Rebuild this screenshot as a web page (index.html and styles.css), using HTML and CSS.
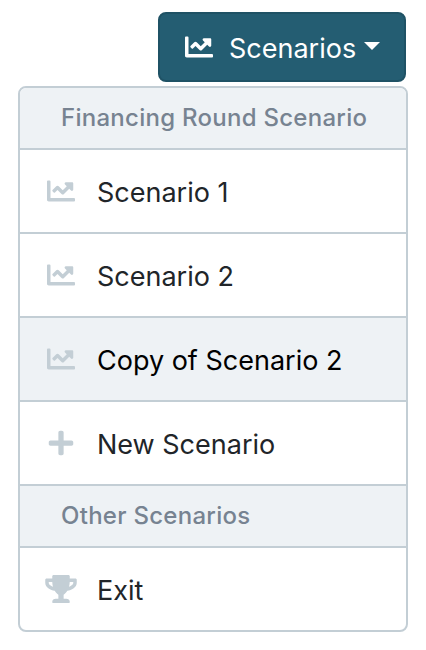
FILE: index.html
```html
<!DOCTYPE html>
<html lang="en">
<head>
<meta charset="utf-8">
<title>Scenarios</title>
<link rel="stylesheet" href="styles.css">
</head>
<body>
<svg class="defs" aria-hidden="true">
  <symbol id="chart" viewBox="0 0 512 512"><path d="M496 384H64V80c0-8.84-7.16-16-16-16H16C7.16 64 0 71.16 0 80v336c0 17.67 14.33 32 32 32h464c8.84 0 16-7.16 16-16v-32c0-8.84-7.16-16-16-16zM464 96H345.94c-21.38 0-32.09 25.85-16.97 40.97l32.4 32.4L288 242.75l-73.37-73.37c-12.5-12.5-32.76-12.5-45.25 0l-68.69 68.69c-6.25 6.25-6.25 16.38 0 22.63l22.62 22.62c6.25 6.25 16.38 6.25 22.63 0L192 237.25l73.37 73.37c12.5 12.5 32.76 12.5 45.25 0l96-96 32.4 32.4c15.12 15.12 40.97 4.41 40.97-16.97V112c.01-8.84-7.15-16-15.99-16z"/></symbol>
  <symbol id="plus" viewBox="0 0 448 512"><path d="M416 208H272V64c0-17.67-14.33-32-32-32h-32c-17.67 0-32 14.33-32 32v144H32c-17.67 0-32 14.33-32 32v32c0 17.67 14.33 32 32 32h144v144c0 17.67 14.33 32 32 32h32c17.67 0 32-14.33 32-32V304h144c17.67 0 32-14.33 32-32v-32c0-17.67-14.33-32-32-32z"/></symbol>
  <symbol id="trophy" viewBox="0 0 576 512"><path d="M552 64H448V24c0-13.3-10.7-24-24-24H152c-13.3 0-24 10.7-24 24v40H24C10.7 64 0 74.7 0 88v56c0 35.7 22.5 72.4 61.9 100.7 31.5 22.7 69.8 37.1 110 41.7C203.3 338.5 240 360 240 360v72h-48c-35.3 0-64 20.7-64 56v12c0 6.6 5.4 12 12 12h296c6.6 0 12-5.4 12-12v-12c0-35.3-28.7-56-64-56h-48v-72s36.7-21.5 68.1-73.6c40.3-4.6 78.6-19 110-41.7 39.3-28.3 61.9-65 61.9-100.7V88c0-13.3-10.7-24-24-24zM99.3 192.8C74.9 175.2 64 155.6 64 144v-16h64.2c1 32.6 5.8 61.2 12.8 86.2-15.1-5.2-29.2-12.4-41.7-21.4zM512 144c0 16.1-17.7 36.1-35.3 48.8-12.5 9-26.7 16.2-41.8 21.4 7-25 11.8-53.6 12.8-86.2H512v16z"/></symbol>
</svg>
<div class="dropdown">
  <button class="toggle" type="button">
    <svg class="icon"><use href="#chart"/></svg>
    <span class="toggle-label">Scenarios</span>
    <span class="caret"></span>
  </button>
  <div class="menu">
    <div class="header">Financing Round Scenario</div>
    <a class="item"><svg class="icon"><use href="#chart"/></svg><span>Scenario 1</span></a>
    <a class="item"><svg class="icon"><use href="#chart"/></svg><span>Scenario 2</span></a>
    <a class="item active"><svg class="icon"><use href="#chart"/></svg><span>Copy of Scenario 2</span></a>
    <a class="item"><svg class="icon"><use href="#plus"/></svg><span>New Scenario</span></a>
    <div class="header">Other Scenarios</div>
    <a class="item"><svg class="icon"><use href="#trophy"/></svg><span>Exit</span></a>
  </div>
</div>
</body>
</html>
```

FILE: styles.css
```css
* { box-sizing: border-box; }
body {
  margin: 0;
  background: #fff;
  font-family: Inter, "Liberation Sans", sans-serif;
  font-size: 27px;
  color: #212529;
}
.defs { display: none; }
.dropdown {
  display: flex;
  flex-direction: column;
  width: 390px;
  margin: 12px 0 0 18px;
}
.toggle {
  display: flex;
  align-items: center;
  align-self: flex-end;
  width: 248px;
  height: 70px;
  margin: 0 2px 4px 0;
  padding: 0 0 0 25px;
  border: 2px solid #1f5265;
  border-radius: 8px;
  background: #245d72;
  color: #fff;
  font: inherit;
}
.icon {
  flex: none;
  width: 32px;
  height: 28px;
  fill: currentColor;
}
.toggle .icon { width: 28px; }
.toggle-label {
  margin-left: 16px;
  padding-top: 4px;
  line-height: 40px;
}
.caret {
  margin: -2px 0 0 8px;
  border: 8px solid transparent;
  border-top-color: #fff;
  border-bottom: 0;
}
.menu {
  border: 2px solid #c3ced5;
  border-radius: 8px;
  overflow: hidden;
}
.header {
  height: 62px;
  padding-left: 41px;
  border-bottom: 2px solid #c3ced5;
  background: #eef2f5;
  color: #778391;
  font-size: 24px;
  font-weight: 500;
  letter-spacing: 0.27px;
  line-height: 60px;
}
.item {
  display: flex;
  align-items: center;
  gap: 20px;
  height: 84px;
  padding-left: 25px;
  border-bottom: 2px solid #c3ced5;
}
.item:last-child {
  height: 82px;
  border-bottom: 0;
}
.item .icon { color: #c3ced5; }
.item span { padding-top: 2px; }
.active {
  background: #eef2f5;
  color: #000;
}
```
